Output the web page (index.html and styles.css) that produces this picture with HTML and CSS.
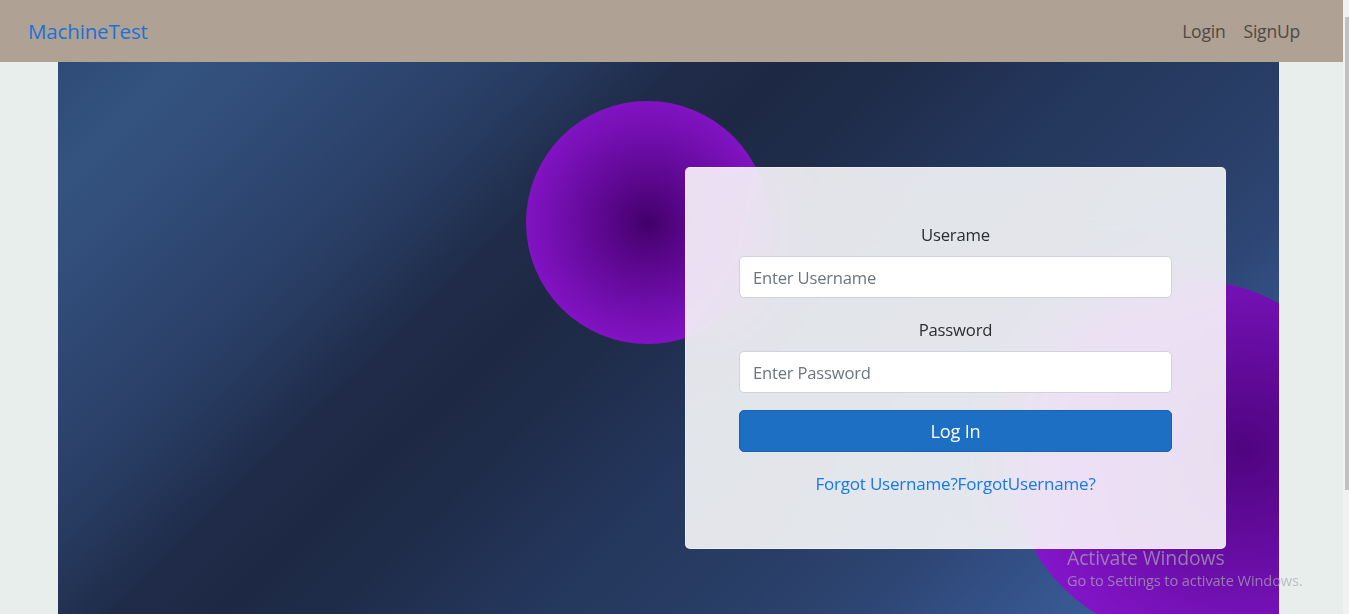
FILE: index.html
```html
<!DOCTYPE html>
<html lang="en">
<head>
<meta charset="utf-8">
<title>MachineTest</title>
<link rel="stylesheet" href="styles.css">
</head>
<body>
<nav class="navbar">
  <a class="brand" href="#">MachineTest</a>
  <div class="nav-links">
    <a class="nav-link" href="#">Login</a>
    <a class="nav-link" href="#">SignUp</a>
  </div>
</nav>
<main class="hero">
  <div class="blob blob-one"></div>
  <div class="blob blob-two"></div>
  <form class="card">
    <label class="field-label" for="username">Userame</label>
    <input class="field-input" id="username" type="text" placeholder="Enter Username">
    <label class="field-label" for="password">Password</label>
    <input class="field-input" id="password" type="password" placeholder="Enter Password">
    <button class="btn-login" type="button">Log In</button>
    <a class="forgot" href="#">Forgot Username?ForgotUsername?</a>
  </form>
</main>
<div class="watermark">
  <div class="wm-title">Activate Windows</div>
  <div class="wm-sub">Go to Settings to activate Windows.</div>
</div>
<div class="scrollbar"><div class="scroll-thumb"></div></div>
</body>
</html>
```
FILE: styles.css
```css
* { box-sizing: border-box; }

html, body { overflow: hidden; }

body {
  margin: 0 6px 0 0;
  background: #e8eeeb;
  font-family: "Open Sans", "Noto Sans", sans-serif;
  color: #212529;
}

.navbar {
  height: 62px;
  background: #afa194;
  display: flex;
  align-items: center;
  justify-content: space-between;
  padding: 0 35px 0 28px;
}

.brand {
  color: #1a72d8;
  font-size: 20.6px;
  text-decoration: none;
  letter-spacing: -0.2px;
}

.nav-links { display: flex; gap: 2px; }

.nav-link {
  color: #4d4945;
  font-size: 17.5px;
  text-decoration: none;
  padding: 0 8px;
  letter-spacing: -0.2px;
}

.hero {
  position: relative;
  overflow: hidden;
  margin-left: 58px;
  width: 1221px;
  height: 552px;
  display: flex;
  justify-content: flex-end;
  align-items: flex-start;
  padding: 105px 53px 0 0;
  background: linear-gradient(136deg,
    #2f4b78 0%, #34537f 7%, #324e7b 12%, #2e4772 18%, #2a3f66 25%,
    #243659 30%, #1f2b48 35%, #1d2944 41%, #1f2c49 47%, #223357 54%,
    #263a60 62%, #293e66 69%, #2e4675 77%, #35548c 85%, #3d5e9b 92%, #4468a8 100%);
}

.blob {
  position: absolute;
  border-radius: 50%;
}

.blob-one {
  left: 468px;
  top: 39px;
  width: 243px;
  height: 243px;
  background: radial-gradient(circle at 50% 50%, #42006a 0%, #59068a 22%, #700eac 50%, #8514c8 75%, #9017d8 100%);
}

.blob-two {
  left: 952px;
  top: 218px;
  width: 360px;
  height: 360px;
  background: radial-gradient(circle at 65% 47%, #4f0480 0%, #600a98 25%, #7511b6 55%, #8a16d2 85%, #9118da 100%);
}

.card {
  position: relative;
  width: 541px;
  height: 382px;
  padding: 55px 53px 0;
  display: flex;
  flex-direction: column;
  align-items: stretch;
  background: rgba(255, 255, 255, 0.87);
  backdrop-filter: blur(36px);
  -webkit-backdrop-filter: blur(36px);
  border: 1px solid rgba(255, 255, 255, 0.35);
  border-radius: 5px;
}

.field-label {
  text-align: center;
  font-size: 16.7px;
  line-height: 24px;
  color: #2b2d31;
  margin-bottom: 9px;
  letter-spacing: -0.2px;
}

.field-input {
  height: 42px;
  border: 1px solid #ced4da;
  border-radius: 5px;
  background: #fff;
  padding: 0 13px;
  font-family: inherit;
  font-size: 16.6px;
  color: #212529;
  margin-bottom: 20px;
  letter-spacing: -0.2px;
}

.field-input::placeholder { color: #6c757d; }

#password { margin-bottom: 17px; }

.btn-login {
  height: 42px;
  border: 1px solid #1a62b4;
  border-radius: 5px;
  background: #1c6fc3;
  color: #fff;
  font-family: inherit;
  font-size: 18.2px;
  letter-spacing: -0.2px;
  margin-bottom: 20px;
}

.forgot {
  text-align: center;
  color: #1479eb;
  font-size: 17px;
  line-height: 24px;
  text-decoration: none;
  letter-spacing: -0.2px;
}

.watermark {
  position: fixed;
  left: 1067px;
  top: 546px;
  color: rgba(170, 170, 176, 0.7);
  pointer-events: none;
  white-space: nowrap;
}

.wm-title { font-size: 19.4px; line-height: 24px; letter-spacing: -0.1px; }
.wm-sub { font-size: 14.6px; line-height: 20px; letter-spacing: -0.1px; }

.scrollbar {
  position: fixed;
  top: 0;
  right: 0;
  width: 6px;
  height: 100%;
  background: #f1f1f1;
}

.scroll-thumb {
  margin: 17px 0 0 2px;
  height: 473px;
  background: #c1c1c1;
}
```
